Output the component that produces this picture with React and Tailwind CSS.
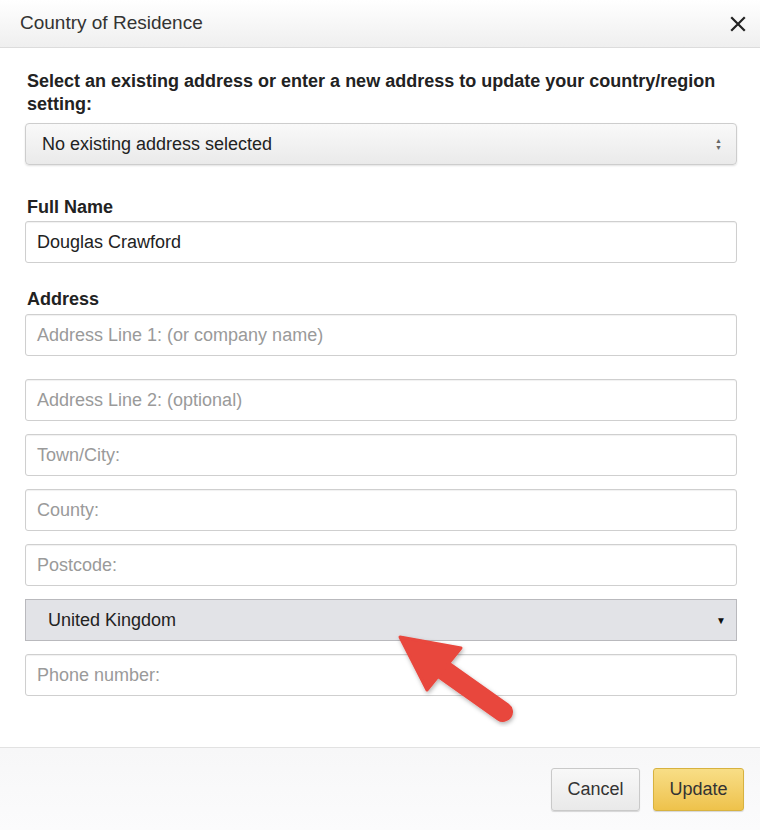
import React from "react";

const FIELDS = [
  { placeholder: "Address Line 2: (optional)", gap: "mt-[23px]" },
  { placeholder: "Town/City:", gap: "mt-[13px]" },
  { placeholder: "County:", gap: "mt-[13px]" },
  { placeholder: "Postcode:", gap: "mt-[13px]" },
];

function TextField({ value, placeholder, className = "" }) {
  return (
    <div
      className={`h-[42px] border border-[#cfcfcf] rounded-[3px] bg-white flex items-center px-[11px] shadow-[inset_0_1px_1px_rgba(0,0,0,0.06)] ${className}`}
    >
      {value ? (
        <span className="text-[18px] text-[#222]">{value}</span>
      ) : (
        <span className="text-[18px] text-[#9a9a9a]">{placeholder}</span>
      )}
    </div>
  );
}

export default function App() {
  return (
    <div className="relative w-[760px] h-[830px] bg-white font-['Liberation_Sans',Arial,sans-serif] text-[#222] overflow-hidden">
      {/* header */}
      <div className="h-[48px] flex items-center justify-between pl-[20px] pr-[14px] bg-gradient-to-b from-white to-[#efefef] border-b border-[#dcdcdc]">
        <span className="text-[19px] text-[#333]">Country of Residence</span>
        <svg width="16" height="16" viewBox="0 0 16 16" className="mt-[1px]">
          <path d="M2 2 L14 14 M14 2 L2 14" stroke="#222" strokeWidth="2.2" strokeLinecap="square" />
        </svg>
      </div>

      {/* body */}
      <div className="pl-[25px] pr-[23px] pt-[22px]">
        <p className="pl-[2px] text-[18px] font-bold leading-[23px] text-[#222]">
          Select an existing address or enter a new address to update your country/region setting:
        </p>
        <div className="mt-[7px] h-[42px] rounded-[4px] border border-[#cdcdcd] bg-gradient-to-b from-[#f9f9f9] to-[#eaeaea] shadow-[0_1px_2px_rgba(0,0,0,0.12)] flex items-center justify-between pl-[16px] pr-[14px]">
          <span className="text-[18px] text-[#222]">No existing address selected</span>
          <span className="flex flex-col items-center leading-none text-[#666]">
            <span className="text-[7px]">▲</span>
            <span className="text-[7px]">▼</span>
          </span>
        </div>

        <div className="mt-[32px] pl-[2px] text-[18px] font-bold text-[#222] h-[20px] leading-[20px]">
          Full Name
        </div>
        <TextField value="Douglas Crawford" className="mt-[4px]" />

        <div className="mt-[26px] pl-[2px] text-[18px] font-bold text-[#222] h-[20px] leading-[20px]">
          Address
        </div>
        <TextField placeholder="Address Line 1: (or company name)" className="mt-[5px]" />
        {FIELDS.map((f) => (
          <TextField key={f.placeholder} placeholder={f.placeholder} className={f.gap} />
        ))}

        <div className="mt-[13px] h-[42px] border border-[#b9b9bd] bg-[#e2e3e7] flex items-center justify-between pl-[22px] pr-[10px]">
          <span className="text-[18px] text-[#222]">United Kingdom</span>
          <span className="text-[10px] text-[#111]">▼</span>
        </div>

        <TextField placeholder="Phone number:" className="mt-[13px]" />
      </div>

      {/* footer */}
      <div className="absolute left-0 right-0 bottom-0 h-[83px] border-t border-[#e2e2e2] bg-gradient-to-b from-[#f7f7f8] to-[#fbfbfc] flex items-center justify-end gap-[13px] pr-[16px]">
        <button className="w-[89px] h-[43px] rounded-[3px] border border-[#c9c9c9] bg-gradient-to-b from-[#f8f8f8] to-[#e9e9e9] shadow-[0_1px_1px_rgba(0,0,0,0.15)] text-[18px] text-[#333]">
          Cancel
        </button>
        <button className="w-[91px] h-[43px] rounded-[3px] border border-[#d7b240] bg-gradient-to-b from-[#f8de86] to-[#eec24a] shadow-[0_1px_1px_rgba(0,0,0,0.15)] text-[18px] text-[#333]">
          Update
        </button>
      </div>

      {/* red annotation arrow */}
      <svg className="absolute left-0 top-0 pointer-events-none" width="760" height="830">
        <defs>
          <filter id="sh" x="-20%" y="-20%" width="140%" height="140%">
            <feDropShadow dx="1" dy="2" stdDeviation="2" floodColor="#000" floodOpacity="0.3" />
          </filter>
        </defs>
        <g filter="url(#sh)" fill="#e8463d" stroke="#e8463d">
          <line x1="438" y1="666" x2="503" y2="712" strokeWidth="20" strokeLinecap="round" />
          <polygon points="400,637 461,648 427,690" strokeWidth="3" strokeLinejoin="round" />
        </g>
      </svg>
    </div>
  );
}
